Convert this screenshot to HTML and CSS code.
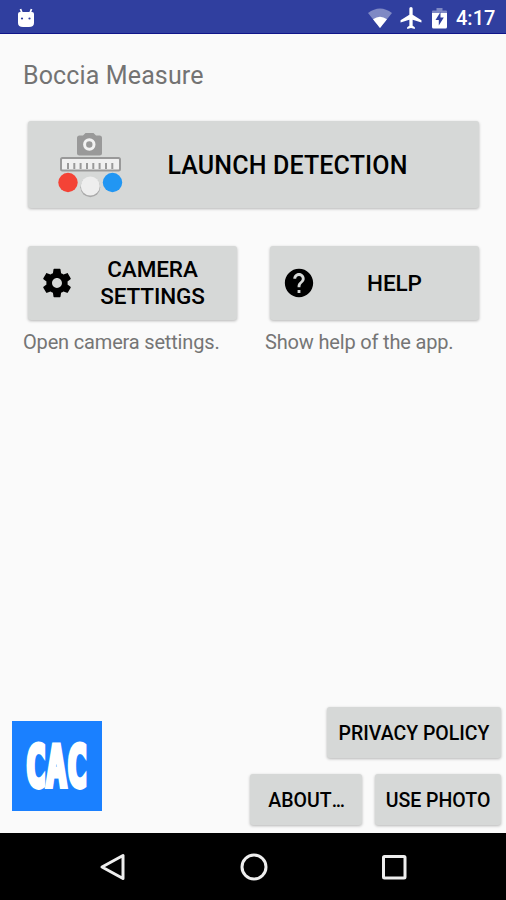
FILE: index.html
```html
<!DOCTYPE html>
<html lang="en">
<head>
    <meta charset="UTF-8">
    <meta name="viewport" content="width=device-width, initial-scale=1.0">
    <title>Boccia Measure</title>
    <link rel="stylesheet" href="styles.css">
</head>
<body>

    <!-- Status Bar -->
    <header class="status-bar">
        <svg class="droid" width="18" height="21" viewBox="0 0 18 21">
            <path d="M3.500 1l1.500 4M14.500 1l-1.500 4" stroke="#fff" stroke-width="1.8"/>
            <path d="M1 6q0-2 2-2h12q2 0 2 2v9q0 4-5 4H6q-5 0-5-4z" fill="#fff"/>
            <circle cx="5" cy="10.500" r="1.1" fill="#303f9f"/>
            <circle cx="12.500" cy="10.500" r="1.1" fill="#303f9f"/>
        </svg>
        <svg class="wifi" width="26" height="21" viewBox="0 0 26 21">
            <path d="M1 5q12-9 24 0L13 20z" fill="#7f89c4"/>
            <path d="M6 11.300q7-5 14 0L13 20z" fill="#fff"/>
        </svg>
        <svg class="plane" width="22" height="22" viewBox="2 2 19 20">
            <path d="M21 16v-2l-8-5V3.500c0-.83-.67-1.500-1.500-1.500S10 2.670 10 3.500V9l-8 5v2l8-2.500V19l-2 1.500V22l3.500-1 3.500 1v-1.500L13 19v-5.500l8 2.500z" fill="#fff"/>
        </svg>
        <svg class="battery" width="15" height="21" viewBox="0 0 15 21">
            <path d="M0 3.500q0-1 1-1h3.500V0h6v2.500H14q1 0 1 1V8H0z" fill="#7f89c4"/>
            <path d="M0 5h15v14q0 1.500-1.500 1.500h-12Q0 20.500 0 19z" fill="#fff"/>
            <path d="M8.500 4L3.500 12h3.300v5.500l5-8H8.500z" fill="#303f9f"/>
        </svg>
        <span class="clock">4:17</span>
    </header>

    <!-- Main Screen -->
    <main class="content">
        <h1>Boccia Measure</h1>

        <button class="launch">
            <svg width="66" height="68" viewBox="0 0 66 68">
                <path d="M20 6q0-2.500 2.500-2.500H26L28.500 1h8L39 3.500h3.500Q45 3.500 45 6v15.500q0 2-2.500 2h-20q-2.500 0-2.500-2z" fill="#999"/>
                <circle cx="32.300" cy="12.500" r="4.700" fill="#999" stroke="#f2f2f2" stroke-width="3"/>
                <rect x="4" y="26" width="59" height="12.500" rx="1.500" fill="#f0f0f0" stroke="#999" stroke-width="2"/>
                <path d="M11 31v6M17.300 31v6M23.600 31v6M30 31v6M36.300 31v6M42.600 31v6M49 31v6M55.300 31v6" stroke="#999" stroke-width="2"/>
                <circle cx="11" cy="50.500" r="9.700" fill="#f44336"/>
                <circle cx="33.300" cy="55.300" r="9.900" fill="#aaa"/>
                <circle cx="33.300" cy="54" r="9.500" fill="#eee"/>
                <circle cx="55.500" cy="50.500" r="9.700" fill="#2196f3"/>
            </svg>
            <span>LAUNCH DETECTION</span>
        </button>

        <div class="options">
            <div class="option">
                <button class="option-button">
                    <svg width="34" height="34" viewBox="0 0 24 24">
                        <path d="M19.430 12.980c.04-.32.070-.64.070-.98s-.03-.66-.07-.98l2.110-1.650c.19-.15.24-.42.120-.64l-2-3.460c-.12-.22-.39-.3-.61-.22l-2.490 1c-.52-.4-1.080-.73-1.690-.98l-.38-2.650C14.460 2.180 14.250 2 14 2h-4c-.25 0-.46.18-.49.42l-.38 2.650c-.61.25-1.170.59-1.690.98l-2.490-1c-.23-.09-.49 0-.61.22l-2 3.460c-.13.22-.07.49.12.64l2.110 1.650c-.04.32-.07.65-.07.98s.03.66.07.98l-2.110 1.650c-.19.15-.24.42-.12.64l2 3.460c.12.22.39.3.61.22l2.490-1c.52.4 1.080.73 1.690.98l.38 2.650c.03.24.24.42.49.42h4c.25 0 .46-.18.49-.42l.38-2.650c.61-.25 1.170-.59 1.690-.98l2.490 1c.23.09.49 0 .61-.22l2-3.460c.12-.22.070-.49-.12-.64l-2.110-1.650zM12 15.500c-1.930 0-3.500-1.570-3.500-3.500s1.570-3.500 3.500-3.500 3.500 1.570 3.500 3.500-1.570 3.500-3.500 3.500z"/>
                    </svg>
                    <span>CAMERA<br>SETTINGS</span>
                </button>
                <p>Open camera settings.</p>
            </div>
            <div class="option">
                <button class="option-button">
                    <svg width="34" height="34" viewBox="0 0 24 24">
                        <path d="M12 2C6.480 2 2 6.480 2 12s4.480 10 10 10 10-4.480 10-10S17.520 2 12 2zm1 17h-2v-2h2v2zm2.070-7.750l-.9.920C13.450 12.900 13 13.500 13 15h-2v-.5c0-1.100.45-2.100 1.170-2.830l1.240-1.260c.37-.36.59-.86.59-1.410 0-1.100-.9-2-2-2s-2 .9-2 2H8c0-2.210 1.790-4 4-4s4 1.790 4 4c0 .88-.36 1.680-.93 2.250z"/>
                    </svg>
                    <span>HELP</span>
                </button>
                <p>Show help of the app.</p>
            </div>
        </div>

        <div class="bottom">
            <svg class="logo" width="90" height="90" viewBox="0 0 90 90">
                <rect width="90" height="90" fill="#1a80ff"/>
                <text transform="translate(13.500 66) scale(0.6 1)">CAC</text>
            </svg>
            <div class="links">
                <button class="small privacy">PRIVACY POLICY</button>
                <button class="small about">ABOUT<span class="dots">...</span></button>
                <button class="small photo">USE PHOTO</button>
            </div>
        </div>
    </main>

    <!-- Navigation Bar -->
    <nav class="nav-bar">
        <svg width="28" height="28" viewBox="0 0 28 28">
            <path d="M24 2.500v23L3 14z"/>
        </svg>
        <svg width="28" height="28" viewBox="0 0 28 28">
            <circle cx="14" cy="14" r="12"/>
        </svg>
        <svg width="28" height="28" viewBox="0 0 28 28">
            <rect x="3.500" y="3.500" width="21.500" height="21.500" rx="1"/>
        </svg>
    </nav>

</body>
</html>
```
FILE: styles.css
```css
body {
    font-family: Roboto, sans-serif;
    background-color: #fafafa;
    color: #000;
    margin: 0;
    height: 900px;
    display: flex;
    flex-direction: column;
    overflow: hidden;
}

svg {
    display: block;
    flex: none;
}

.status-bar {
    box-sizing: border-box;
    height: 34px;
    flex: none;
    display: flex;
    align-items: center;
    padding: 3px 11px 0 17px;
    background-color: #303f9f;
    border-bottom: 1px solid #10158a;
    color: #fff;
}

.droid {
    margin-right: auto;
}

.wifi {
    margin-right: 7px;
}

.plane {
    margin-right: 10px;
}

.battery {
    margin-right: 9px;
}

.clock {
    width: 39px;
    font-size: 20px;
    font-weight: 500;
    white-space: nowrap;
}

.content {
    flex: 1;
    display: flex;
    flex-direction: column;
}

h1 {
    margin: 27px 0 30px 23px;
    font-size: 25px;
    line-height: 30px;
    font-weight: 400;
    letter-spacing: 0.13px;
    color: #737373;
}

button {
    font-family: inherit;
    font-weight: 500;
    color: #000;
    background-color: #d6d8d7;
    border: none;
    border-radius: 3px;
    box-shadow: 0 1px 3px rgba(0, 0, 0, 0.28);
    cursor: pointer;
    padding: 0;
}

.launch {
    display: flex;
    align-items: center;
    height: 87px;
    margin: 0 27px 0 28px;
    padding: 2px 0 0 29px;
    font-size: 25px;
    letter-spacing: 0.15px;
}

.launch span {
    flex: 1;
    padding-left: 8px;
    text-align: center;
    margin-right: 35px;
}

.options {
    display: grid;
    grid-template-columns: 209px 209px;
    column-gap: 33px;
    margin: 38px 0 0 28px;
}

.option-button {
    display: flex;
    align-items: center;
    width: 100%;
    height: 74px;
    padding: 0 12px;
    font-size: 22.5px;
    line-height: 27px;
    letter-spacing: -0.1px;
}

.option-button span {
    flex: 1;
    padding-left: 6px;
    text-align: center;
}

.option p {
    margin: 10px 0 0 -5px;
    font-size: 20px;
    line-height: 24px;
    letter-spacing: -0.17px;
    color: #757575;
    white-space: nowrap;
}

.bottom {
    display: flex;
    justify-content: space-between;
    align-items: flex-end;
    margin-top: auto;
    padding: 0 5px 8px 12px;
}

.logo {
    margin-bottom: 14px;
}

.logo text {
    font-family: "DejaVu Sans Mono", monospace;
    font-size: 57px;
    font-weight: 700;
    fill: #fff;
    stroke: #fff;
    stroke-width: 5;
}

.links {
    display: grid;
    grid-template-columns: 112px 126px;
    column-gap: 13px;
    row-gap: 16px;
}

.small {
    height: 51px;
    padding-top: 2px;
    font-size: 19.5px;
    white-space: nowrap;
}

.dots {
    letter-spacing: -1.4px;
}

.privacy {
    grid-column: 1 / 3;
    justify-self: end;
    width: 174px;
}

.nav-bar {
    box-sizing: border-box;
    height: 67px;
    flex: none;
    display: flex;
    justify-content: space-between;
    align-items: center;
    padding: 0 98px 0 99px;
    background-color: #000;
}

.nav-bar svg {
    fill: none;
    stroke: #eee;
    stroke-width: 3;
    stroke-linejoin: round;
}
```
